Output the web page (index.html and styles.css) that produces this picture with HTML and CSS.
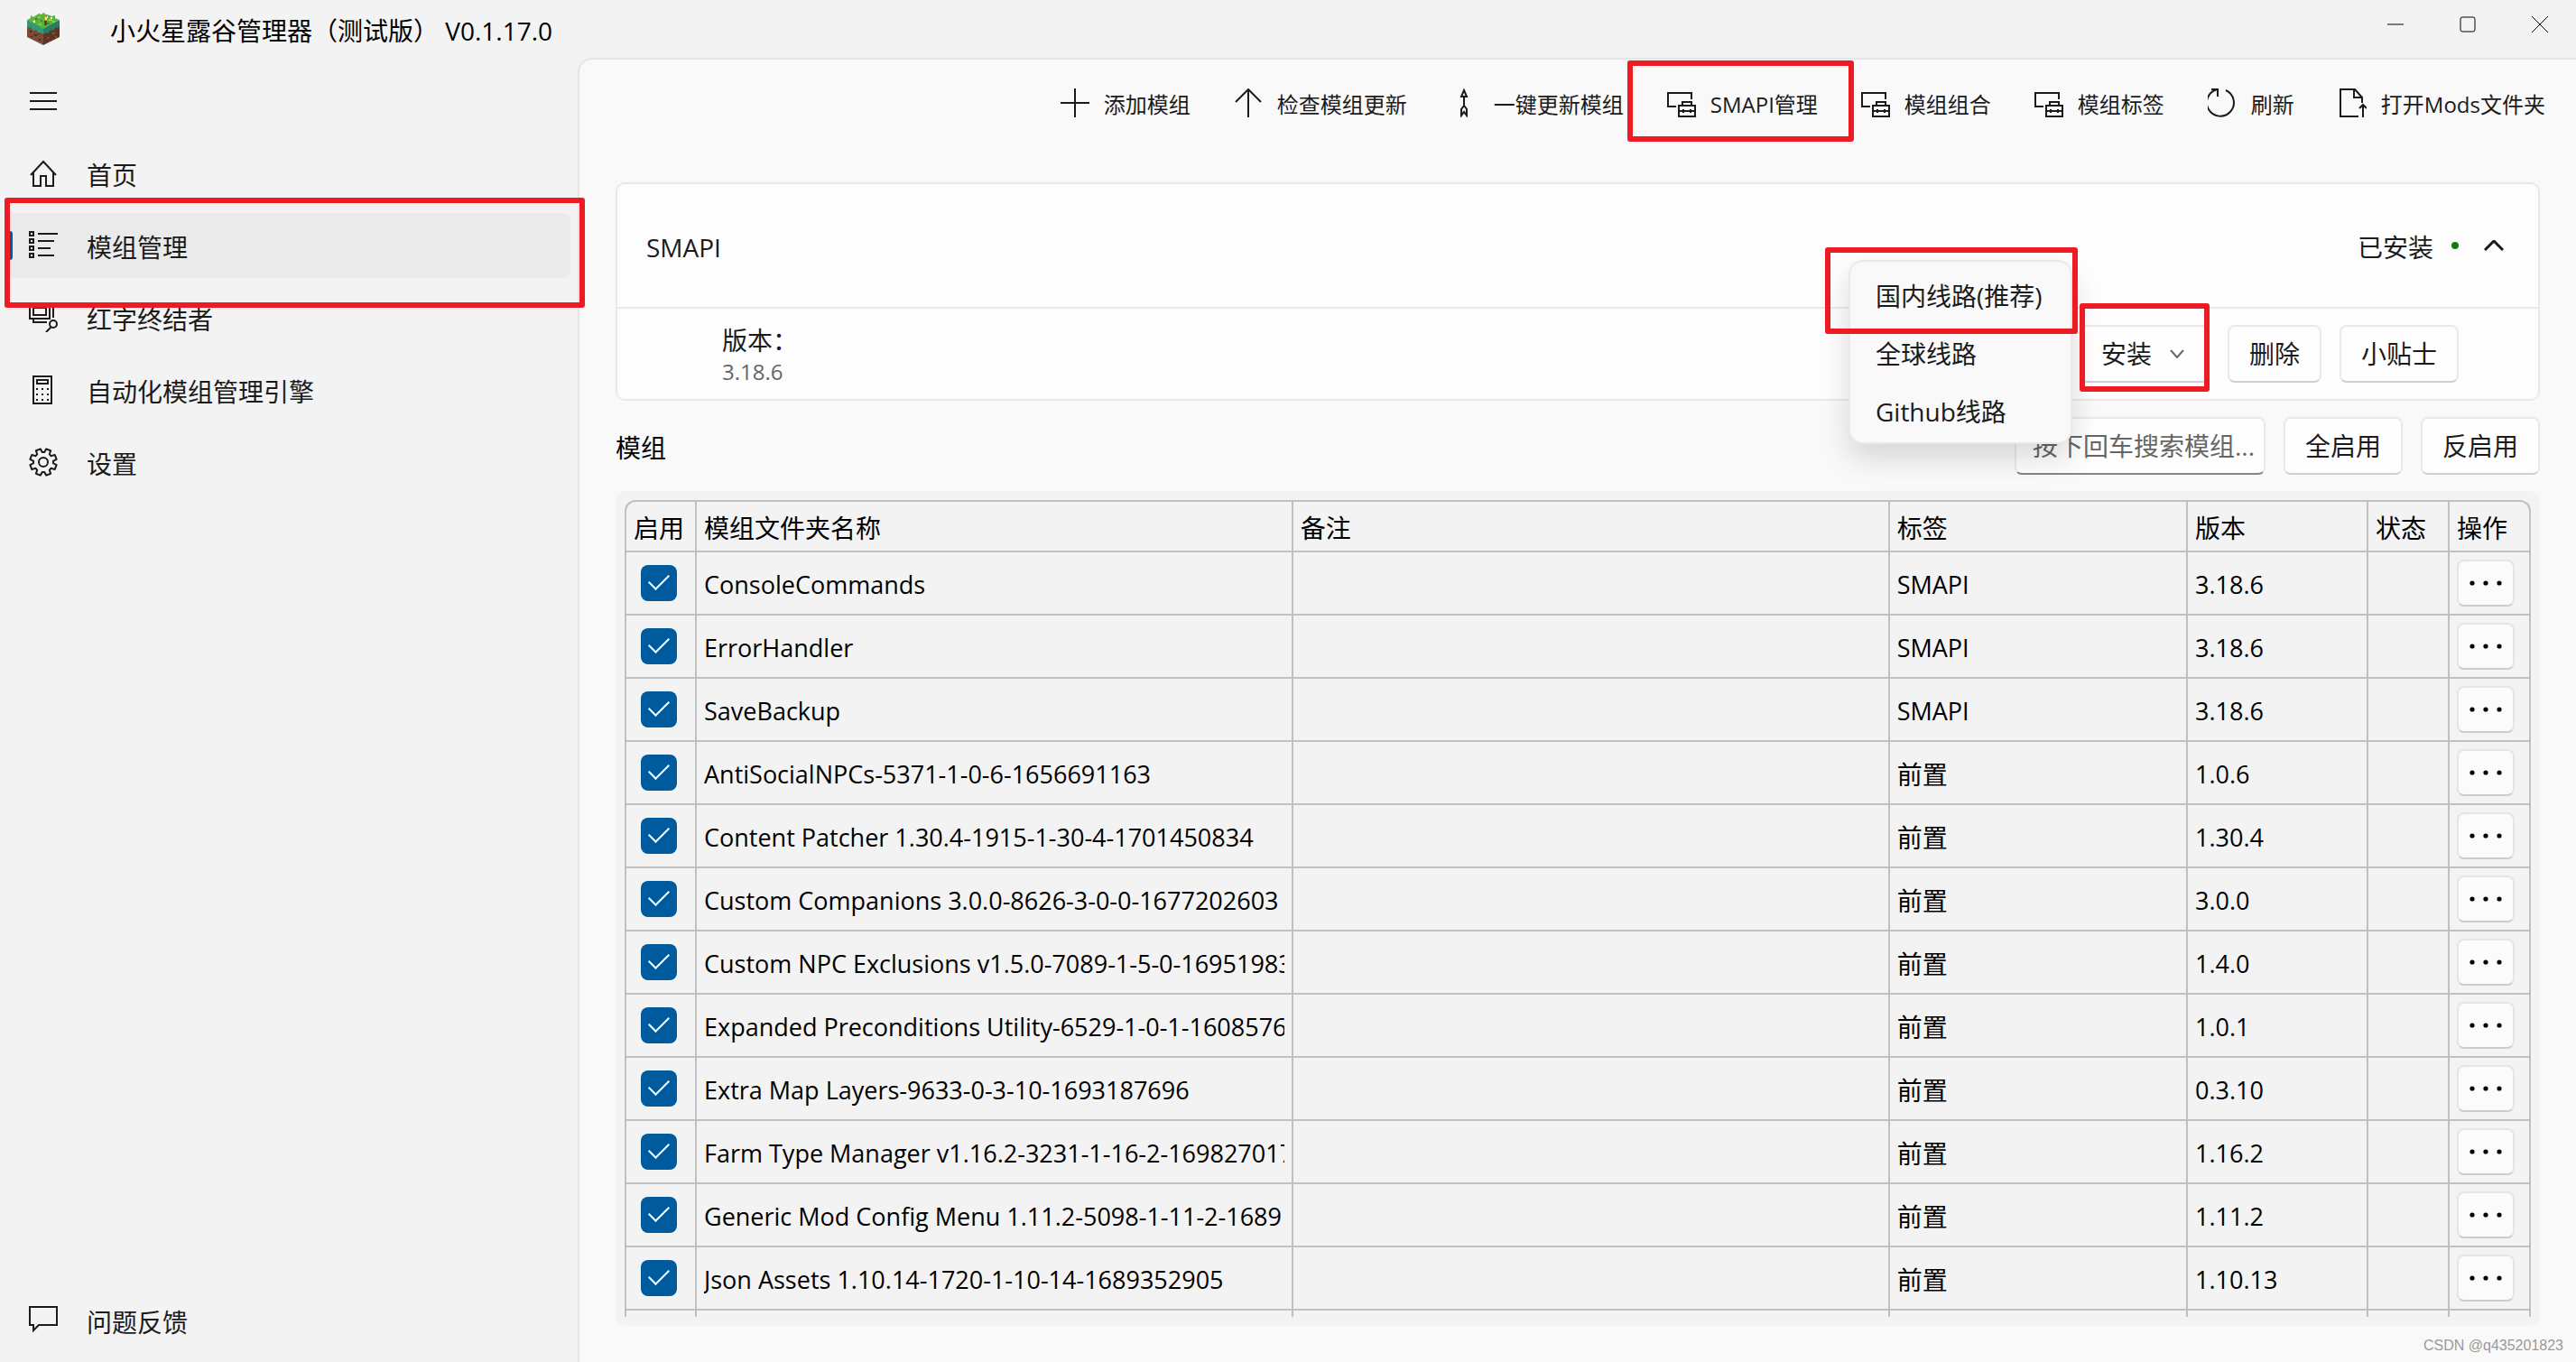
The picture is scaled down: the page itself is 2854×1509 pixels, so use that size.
FILE: index.html
```html
<!DOCTYPE html>
<html lang="zh-CN">
  <head>
    <meta charset="UTF-8" />
    <meta name="viewport" content="width=device-width, initial-scale=1.0" />
    <title>小火星露谷管理器</title>
    <link rel="stylesheet" href="styles.css">
  </head>
  <body>
    <!-- Shared icons -->
    <svg class="sprite" aria-hidden="true">
      <symbol id="icon-toolbox" viewBox="0 0 32 32">
        <path d="M10 20H1V5h26v7M13 19h18v12H13zM17 19v-4h10v4M13 25h18M18 23v4M26 23v4" />
      </symbol>
      <symbol id="icon-more" viewBox="0 0 36 6">
        <circle cx="3" cy="3" r="2.6" />
        <circle cx="18" cy="3" r="2.6" />
        <circle cx="33" cy="3" r="2.6" />
      </symbol>
    </svg>

    <!-- Title bar -->
    <header class="titlebar">
      <svg class="logo" viewBox="0 0 36 36">
        <path fill="#7b4a35" d="M0 13l18 9v14L0 27z" />
        <path fill="#5d3426" d="M18 22l18-9v14l-18 9z" />
        <path fill="#2f9a78" d="M0 8l18 8v8l-3-2-2 1-3-4-3 1-3-4-2 1-2-2z" />
        <path fill="#257f68" d="M36 8l-18 8v8l3-2 2 1 3-4 3 1 3-4 2 1 2-2z" />
        <path fill="#5eb23c" d="M0 8l4-2V3l3 2 3-2 3-2 3 1 2-2 3 2 4 1 2 1 4-1v3l5 2-18 10z" />
        <path fill="#8ad04a" d="M6 8h3v2H6zM12 4h3v2h-3zM24 7h4v2h-4zM13 12h3v2h-3zM28 9h3v2h-3z" />
        <path fill="#3c8a34" d="M9 6h2v2H9zM22 11h3v2h-3zM15 8h2v2h-2z" />
        <path fill="#e8f4dc" d="M7 9h2v2H7zM26 5h2v2h-2zM22 4h1v2h-1z" />
        <path fill="#6b3d1c" d="M19 8h3v6h-3z" />
        <path fill="#f08a1c" d="M19 4h3v5h-3z" />
        <path fill="#ffe14a" d="M20 5h2v3h-2z" />
        <path fill="#4a281d" d="M3 20h2v2H3zM8 24h3v2H8zM13 29h2v2h-2zM12 23h2v1h-2zM4 26h2v1H4z" />
        <path fill="#84513c" d="M22 27h2v2h-2zM28 22h3v2h-3zM31 26h2v2h-2zM25 31h2v1h-2z" />
      </svg>
      <h1 class="app-title label">小火星露谷管理器（测试版） V0.1.17.0</h1>
      <div class="window-buttons">
        <button type="button" aria-label="最小化"><svg viewBox="0 0 18 18"><path d="M0 9h18" /></svg></button>
        <button type="button" aria-label="最大化"><svg viewBox="0 0 18 18"><rect x="1" y="1" width="16" height="16" rx="2" /></svg></button>
        <button type="button" aria-label="关闭"><svg viewBox="0 0 18 18"><path d="M0 0l18 18M18 0L0 18" /></svg></button>
      </div>
    </header>

    <div class="layout">
      <!-- Sidebar -->
      <nav class="sidebar">
        <button type="button" class="menu-toggle" aria-label="菜单">
          <svg class="icon" viewBox="0 0 32 32"><path d="M1 7h30M1 16h30M1 25h30" /></svg>
        </button>
        <a class="nav-item" href="#">
          <svg class="icon" viewBox="0 0 32 32"><path d="M2 18L16 3l14 15M5 15v15h8V19h6v11h8V15" /></svg>
          <span class="label">首页</span>
        </a>
        <a class="nav-item active" href="#">
          <svg class="icon" viewBox="0 0 32 32"><path d="M1 1h4v4H1zM1 9h4v4H1zM1 17h4v4H1zM1 25h4v4H1zM10 3h22M10 11h18M10 19h14M10 27h18" /></svg>
          <span class="label">模组管理</span>
          <span class="mark mark-nav"></span>
        </a>
        <a class="nav-item" href="#">
          <svg class="icon" viewBox="0 0 32 32"><path d="M1 2h22v15H1zM5 5h14v8H5zM27 3v13M5 17v4h15" /><circle cx="27" cy="23" r="4" /><path d="M25 26l-6 6" /></svg>
          <span class="label">红字终结者</span>
        </a>
        <a class="nav-item" href="#">
          <svg class="icon" viewBox="0 0 32 32"><path d="M5 1h20v30H5zM9 5h12v4H9z" /><path d="M8 15h2M14 15h2M20 15h2M8 21h2M14 21h2M20 21h2M8 27h2M14 27h2M20 27h2" /></svg>
          <span class="label">自动化模组管理引擎</span>
        </a>
        <a class="nav-item" href="#">
          <svg class="icon" viewBox="-16 -16 32 32"><path stroke-linejoin="round" d="M10.9 1.2l3.7 2-1.9 4.9-4.1-1.3-1.8 1.8 1.3 4.1-4.9 1.9-2-3.7h-2.4l-2 3.7-4.9-1.9 1.3-4.1-1.8-1.8-4.1 1.3-1.9-4.9 3.7-2v-2.4l-3.7-2 1.9-4.9 4.1 1.3 1.8-1.8-1.3-4.1 4.9-1.9 2 3.7h2.4l2-3.7 4.9 1.9-1.3 4.1 1.8 1.8 4.1-1.3 1.9 4.9-3.7 2z" /><circle r="5" /></svg>
          <span class="label">设置</span>
        </a>
        <a class="nav-item nav-bottom" href="#">
          <svg class="icon" viewBox="0 0 32 32"><path d="M1 1h30v20H11l-6 6v-6H1z" /></svg>
          <span class="label">问题反馈</span>
        </a>
      </nav>

      <main class="content">
        <!-- Command bar -->
        <div class="commands">
          <button type="button"><svg class="icon" viewBox="0 0 32 32"><path d="M0 16h32M16 0v32" /></svg><span class="label">添加模组</span></button>
          <button type="button"><svg class="icon" viewBox="0 0 32 32"><path d="M16 32V1M2 15L16 1l14 14" /></svg><span class="label">检查模组更新</span></button>
          <button type="button"><svg class="icon" viewBox="0 0 32 32"><path d="M15 2l3 7h-6zM15 9v10M15 19l-3 4v7l3-4 3 4v-7z" /></svg><span class="label">一键更新模组</span></button>
          <button type="button"><svg class="icon"><use href="#icon-toolbox" /></svg><span class="label">SMAPI管理</span><span class="mark mark-command"></span></button>
          <button type="button"><svg class="icon"><use href="#icon-toolbox" /></svg><span class="label">模组组合</span></button>
          <button type="button"><svg class="icon"><use href="#icon-toolbox" /></svg><span class="label">模组标签</span></button>
          <button type="button"><svg class="icon" viewBox="0 0 32 32"><path d="M4 1h7v8M20 2a15 15 0 1 1-9-1" /></svg><span class="label">刷新</span></button>
          <button type="button"><svg class="icon" viewBox="0 0 32 32"><path d="M27 16v-6l-8-9H3v30h20M18 1v9h9M28 32V18M24 22l4-4 4 4" /></svg><span class="label">打开Mods文件夹</span></button>
        </div>

        <!-- SMAPI -->
        <section class="card">
          <div class="card-header">
            <h2 class="card-title label">SMAPI</h2>
            <span class="label">已安装</span>
            <span class="status-dot"></span>
            <button type="button" class="collapse" aria-label="收起"><svg viewBox="0 0 22 12"><path d="M1 11L11 1l10 10" /></svg></button>
          </div>
          <div class="card-body">
            <div class="version">
              <div>版本：</div>
              <div class="version-number">3.18.6</div>
            </div>
            <div class="dropdown">
              <button type="button" class="btn btn-install" aria-haspopup="true" aria-expanded="true">安装<svg viewBox="0 0 16 10"><path d="M1 1l7 8 7-8" /></svg></button>
              <div class="menu">
                <button type="button">国内线路(推荐)</button>
                <button type="button">全球线路</button>
                <button type="button">Github线路</button>
              </div>
              <span class="mark mark-menu"></span>
              <span class="mark mark-install"></span>
            </div>
            <button type="button" class="btn">删除</button>
            <button type="button" class="btn">小贴士</button>
          </div>
        </section>

        <!-- Mod list -->
        <div class="toolbar">
          <h2 class="toolbar-title label">模组</h2>
          <input type="text" class="search" placeholder="按下回车搜索模组..." aria-label="搜索模组" />
          <button type="button" class="btn">全启用</button>
          <button type="button" class="btn">反启用</button>
        </div>

        <section class="list">
          <div class="list-frame">
            <table>
              <colgroup>
                <col class="col-enabled" />
                <col class="col-name" />
                <col class="col-note" />
                <col />
                <col class="col-version" />
                <col class="col-state" />
                <col class="col-action" />
              </colgroup>
              <thead>
                <tr>
                  <th>启用</th>
                  <th>模组文件夹名称</th>
                  <th>备注</th>
                  <th>标签</th>
                  <th>版本</th>
                  <th>状态</th>
                  <th>操作</th>
                </tr>
              </thead>
              <tbody>
                <tr>
                  <td class="control"><input type="checkbox" aria-label="启用" checked /></td>
                  <td><div class="name">ConsoleCommands</div></td>
                  <td></td><td class="latin">SMAPI</td><td class="latin">3.18.6</td><td></td>
                  <td class="control"><button type="button" class="more" aria-label="更多"><svg><use href="#icon-more" /></svg></button></td>
                </tr>
                <tr>
                  <td class="control"><input type="checkbox" aria-label="启用" checked /></td>
                  <td><div class="name">ErrorHandler</div></td>
                  <td></td><td class="latin">SMAPI</td><td class="latin">3.18.6</td><td></td>
                  <td class="control"><button type="button" class="more" aria-label="更多"><svg><use href="#icon-more" /></svg></button></td>
                </tr>
                <tr>
                  <td class="control"><input type="checkbox" aria-label="启用" checked /></td>
                  <td><div class="name">SaveBackup</div></td>
                  <td></td><td class="latin">SMAPI</td><td class="latin">3.18.6</td><td></td>
                  <td class="control"><button type="button" class="more" aria-label="更多"><svg><use href="#icon-more" /></svg></button></td>
                </tr>
                <tr>
                  <td class="control"><input type="checkbox" aria-label="启用" checked /></td>
                  <td><div class="name">AntiSocialNPCs-5371-1-0-6-1656691163</div></td>
                  <td></td><td>前置</td><td class="latin">1.0.6</td><td></td>
                  <td class="control"><button type="button" class="more" aria-label="更多"><svg><use href="#icon-more" /></svg></button></td>
                </tr>
                <tr>
                  <td class="control"><input type="checkbox" aria-label="启用" checked /></td>
                  <td><div class="name">Content Patcher 1.30.4-1915-1-30-4-1701450834</div></td>
                  <td></td><td>前置</td><td class="latin">1.30.4</td><td></td>
                  <td class="control"><button type="button" class="more" aria-label="更多"><svg><use href="#icon-more" /></svg></button></td>
                </tr>
                <tr>
                  <td class="control"><input type="checkbox" aria-label="启用" checked /></td>
                  <td><div class="name">Custom Companions 3.0.0-8626-3-0-0-1677202603</div></td>
                  <td></td><td>前置</td><td class="latin">3.0.0</td><td></td>
                  <td class="control"><button type="button" class="more" aria-label="更多"><svg><use href="#icon-more" /></svg></button></td>
                </tr>
                <tr>
                  <td class="control"><input type="checkbox" aria-label="启用" checked /></td>
                  <td><div class="name">Custom NPC Exclusions v1.5.0-7089-1-5-0-16951983</div></td>
                  <td></td><td>前置</td><td class="latin">1.4.0</td><td></td>
                  <td class="control"><button type="button" class="more" aria-label="更多"><svg><use href="#icon-more" /></svg></button></td>
                </tr>
                <tr>
                  <td class="control"><input type="checkbox" aria-label="启用" checked /></td>
                  <td><div class="name">Expanded Preconditions Utility-6529-1-0-1-1608576</div></td>
                  <td></td><td>前置</td><td class="latin">1.0.1</td><td></td>
                  <td class="control"><button type="button" class="more" aria-label="更多"><svg><use href="#icon-more" /></svg></button></td>
                </tr>
                <tr>
                  <td class="control"><input type="checkbox" aria-label="启用" checked /></td>
                  <td><div class="name">Extra Map Layers-9633-0-3-10-1693187696</div></td>
                  <td></td><td>前置</td><td class="latin">0.3.10</td><td></td>
                  <td class="control"><button type="button" class="more" aria-label="更多"><svg><use href="#icon-more" /></svg></button></td>
                </tr>
                <tr>
                  <td class="control"><input type="checkbox" aria-label="启用" checked /></td>
                  <td><div class="name">Farm Type Manager v1.16.2-3231-1-16-2-169827017</div></td>
                  <td></td><td>前置</td><td class="latin">1.16.2</td><td></td>
                  <td class="control"><button type="button" class="more" aria-label="更多"><svg><use href="#icon-more" /></svg></button></td>
                </tr>
                <tr>
                  <td class="control"><input type="checkbox" aria-label="启用" checked /></td>
                  <td><div class="name">Generic Mod Config Menu 1.11.2-5098-1-11-2-1689</div></td>
                  <td></td><td>前置</td><td class="latin">1.11.2</td><td></td>
                  <td class="control"><button type="button" class="more" aria-label="更多"><svg><use href="#icon-more" /></svg></button></td>
                </tr>
                <tr>
                  <td class="control"><input type="checkbox" aria-label="启用" checked /></td>
                  <td><div class="name">Json Assets 1.10.14-1720-1-10-14-1689352905</div></td>
                  <td></td><td>前置</td><td class="latin">1.10.13</td><td></td>
                  <td class="control"><button type="button" class="more" aria-label="更多"><svg><use href="#icon-more" /></svg></button></td>
                </tr>
                <tr>
                  <td></td><td></td><td></td><td></td><td></td><td></td><td></td>
                </tr>
              </tbody>
            </table>
          </div>
        </section>
        <div class="watermark">CSDN @q435201823</div>
      </main>
    </div>
  </body>
</html>
```
FILE: styles.css
```css
* {
  box-sizing: border-box;
}
body {
  display: flex;
  flex-direction: column;
  height: 100vh;
  margin: 0;
  overflow: hidden;
  background-color: #f3f3f3;
  color: #1b1b1b;
  font-family: "Open Sans", "Noto Sans CJK SC", sans-serif;
  font-size: 28px;
  line-height: 40px;
}
h1,
h2 {
  margin: 0;
  font-size: 28px;
  font-weight: normal;
}
button,
input {
  font: inherit;
  color: inherit;
}
button {
  padding: 0;
  border: none;
  background: none;
  cursor: pointer;
  white-space: nowrap;
}
svg {
  display: block;
  flex: none;
  fill: none;
  stroke: currentColor;
  stroke-width: 2;
}
.sprite {
  position: absolute;
  width: 0;
  height: 0;
}
.icon {
  width: 32px;
  height: 32px;
}
.label {
  padding-top: 3px;
}

/* Title bar */
.titlebar {
  display: flex;
  align-items: center;
  flex: none;
  height: 64px;
  padding-left: 30px;
  color: #000;
}
.logo {
  width: 36px;
  height: 36px;
  stroke: none;
}
.app-title {
  flex: 1;
  margin-left: 56px;
}
.window-buttons {
  display: flex;
  align-self: flex-start;
}
.window-buttons button {
  display: flex;
  align-items: center;
  justify-content: center;
  width: 80px;
  height: 54px;
}
.window-buttons svg {
  width: 18px;
  height: 18px;
  stroke-width: 1;
}

.layout {
  display: flex;
  flex: 1;
  min-height: 0;
}

/* Sidebar */
.sidebar {
  display: flex;
  flex-direction: column;
  gap: 8px;
  flex: none;
  width: 640px;
  padding: 12px 8px 10px;
}
.menu-toggle {
  height: 72px;
  padding: 0 24px;
  align-self: flex-start;
}
.nav-item {
  position: relative;
  display: flex;
  align-items: center;
  gap: 32px;
  height: 72px;
  padding: 0 24px;
  border-radius: 8px;
  color: inherit;
  text-decoration: none;
}
.nav-item.active {
  background-color: #eaeaea;
}
.nav-item.active::before {
  content: "";
  position: absolute;
  left: 0;
  width: 6px;
  height: 32px;
  border-radius: 3px;
  background-color: #005a9e;
}
.nav-bottom {
  margin-top: auto;
}

/* Content */
.content {
  position: relative;
  display: flex;
  flex-direction: column;
  flex: 1;
  min-width: 0;
  padding: 0 40px 40px;
  border-top: 2px solid #e5e5e5;
  border-left: 2px solid #e5e5e5;
  border-top-left-radius: 16px;
  background-color: #f9f9f9;
}
.commands {
  display: flex;
  justify-content: flex-end;
  flex: none;
  height: 96px;
  margin-right: -30px;
  margin-bottom: 40px;
}
.commands button {
  position: relative;
  display: flex;
  align-items: center;
  gap: 16px;
  padding: 0 24px;
  font-size: 24px;
}
.card {
  flex: none;
  border: 2px solid #e9e9e9;
  border-radius: 10px;
  background-color: #fdfdfd;
}
.card-header {
  display: flex;
  align-items: center;
  height: 136px;
  padding: 0 38px 0 32px;
}
.card-title {
  flex: 1;
}
.status-dot {
  width: 8px;
  height: 8px;
  margin: 0 28px 0 20px;
  border-radius: 50%;
  background-color: #107c10;
}
.collapse svg {
  width: 22px;
  height: 12px;
  stroke-width: 3;
}
.card-body {
  display: flex;
  align-items: center;
  gap: 20px;
  height: 102px;
  padding: 0 88px 0 116px;
  border-top: 2px solid #e9e9e9;
}
.version {
  flex: 1;
}
.version-number {
  color: #666;
  font-size: 24px;
  line-height: 30px;
}
.btn {
  height: 64px;
  padding: 0 22px;
  border: 2px solid #e9e9e9;
  border-bottom-color: #d0d0d0;
  border-radius: 8px;
  background-color: #fefefe;
}
.dropdown {
  position: relative;
}
.btn-install {
  display: flex;
  align-items: center;
  gap: 20px;
  padding-right: 26px;
}
.btn-install svg {
  width: 16px;
  height: 10px;
  color: #666;
}
.menu {
  position: absolute;
  top: -72px;
  left: -256px;
  z-index: 1;
  width: 248px;
  padding: 6px 2px 2px;
  border: 2px solid #e9e9e9;
  border-radius: 16px;
  background-color: #f9f9f9;
  box-shadow: 0 16px 32px rgba(0, 0, 0, 0.14);
}
.menu button {
  display: block;
  width: 100%;
  height: 64px;
  padding: 0 26px;
  text-align: left;
}
.toolbar {
  display: flex;
  align-items: center;
  gap: 20px;
  flex: none;
  margin: 18px 0;
}
.toolbar-title {
  flex: 1;
  color: #000;
}
.search {
  width: 278px;
  height: 64px;
  padding: 0 10px 0 18px;
  border: 2px solid #e9e9e9;
  border-bottom-color: #868686;
  border-radius: 8px;
  background-color: #fefefe;
}
.search::placeholder {
  color: #666;
}

/* Mod list */
.list {
  display: flex;
  flex: 1;
  min-height: 0;
  padding: 10px;
  border-radius: 12px;
  background-color: #f3f3f3;
}
.list-frame {
  flex: 1;
  min-width: 0;
  overflow: hidden;
  border: 2px solid #c0c0c0;
  border-bottom: none;
  border-radius: 12px 12px 0 0;
}
table {
  width: 100%;
  table-layout: fixed;
  border-spacing: 0;
  color: #000;
}
.col-enabled {
  width: 78px;
}
.col-name,
.col-note {
  width: 31.35%;
}
.col-version {
  width: 200px;
}
.col-state {
  width: 90px;
}
.col-action {
  width: 88px;
}
th,
td {
  height: 70px;
  padding: 3px 8px 0;
  border-right: 2px solid #c0c0c0;
  border-bottom: 2px solid #c0c0c0;
  font-weight: normal;
  text-align: left;
}
th {
  height: 56px;
}
th:last-child,
td:last-child {
  border-right: none;
}
.control {
  padding-top: 0;
}
.name {
  overflow: hidden;
  white-space: nowrap;
}
.name,
.latin {
  font-size: 27px;
}
input[type="checkbox"] {
  appearance: none;
  display: grid;
  place-items: center;
  width: 40px;
  height: 40px;
  margin: 0 8px;
  border-radius: 8px;
  background-color: #005a9e;
}
input[type="checkbox"]:checked::after {
  content: "";
  width: 10px;
  height: 20px;
  margin-bottom: 8px;
  border-right: 2px solid #fff;
  border-bottom: 2px solid #fff;
  transform: rotate(45deg);
}
.more {
  display: flex;
  align-items: center;
  justify-content: center;
  width: 64px;
  height: 52px;
  border: 2px solid #e5e5e5;
  border-bottom-color: #cccccc;
  border-radius: 8px;
  background-color: #fbfbfb;
}
.more svg {
  width: 36px;
  height: 6px;
  fill: currentColor;
  stroke: none;
}

/* Red highlight frames */
.mark {
  position: absolute;
  z-index: 2;
  border: 6px solid #ed1c24;
  border-radius: 3px;
  pointer-events: none;
}
.mark-nav {
  top: -17px;
  right: -16px;
  bottom: -33px;
  left: -3px;
}
.mark-command {
  top: 1px;
  right: -16px;
  bottom: 5px;
  left: -20px;
}
.mark-menu {
  top: -86px;
  left: -282px;
  width: 280px;
  height: 96px;
}
.mark-install {
  top: -24px;
  right: 0;
  bottom: -10px;
  left: 0;
}
.watermark {
  position: absolute;
  right: 14px;
  bottom: 8px;
  color: #999;
  font-family: "Liberation Sans", sans-serif;
  font-size: 16px;
  line-height: 20px;
}
```
